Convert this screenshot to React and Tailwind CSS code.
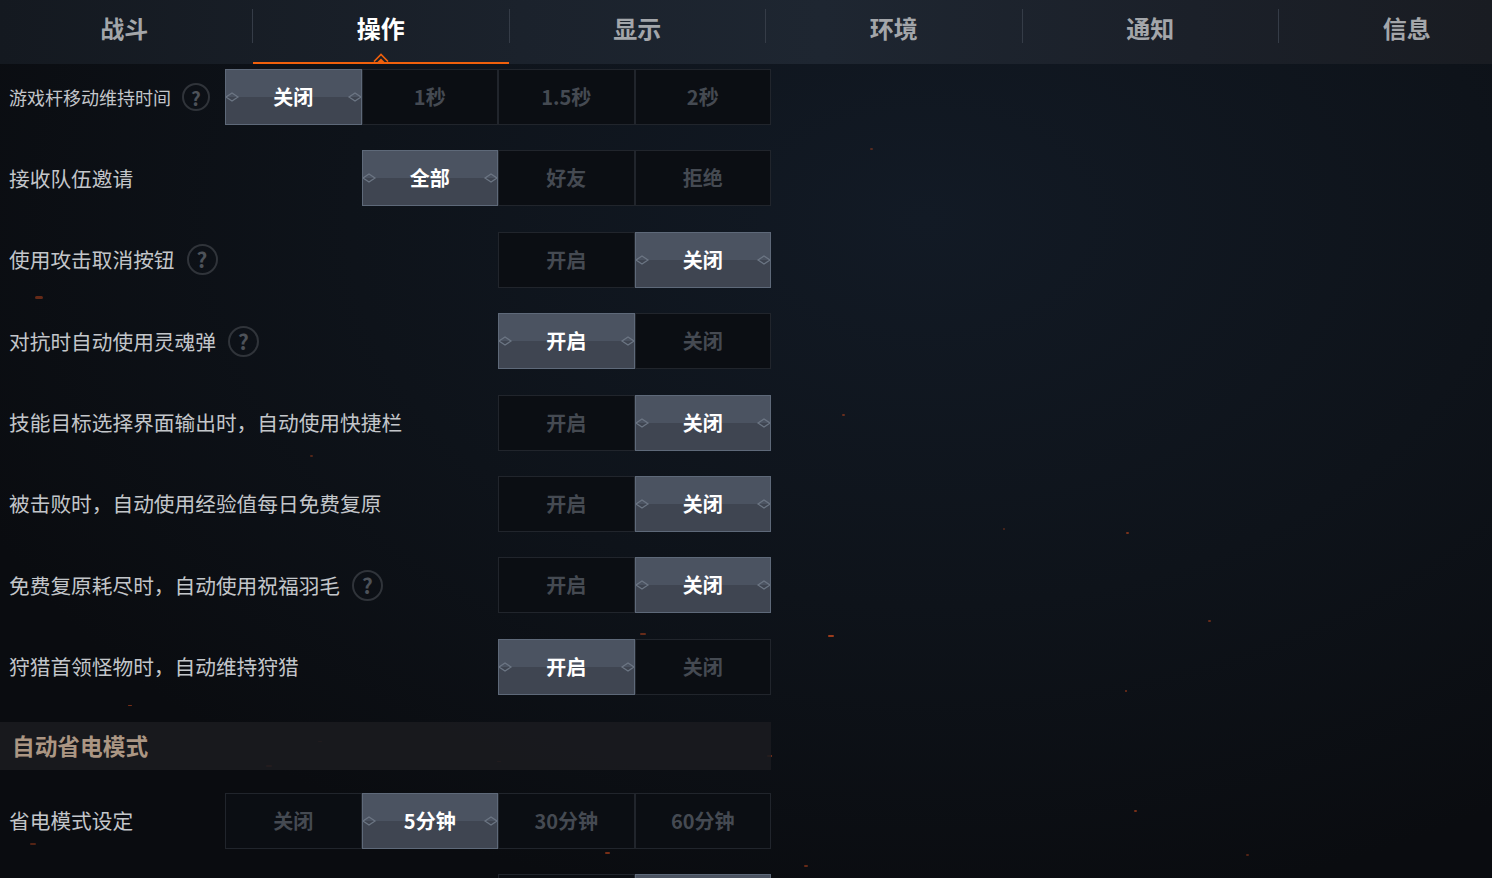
import React from "react";

const tabs = ["战斗", "操作", "显示", "环境", "通知", "信息"];

const rows = [
  { label: "游戏杆移动维持时间", small: true, help: true, options: ["关闭", "1秒", "1.5秒", "2秒"], active: 0 },
  { label: "接收队伍邀请", options: ["全部", "好友", "拒绝"], active: 0 },
  { label: "使用攻击取消按钮", help: true, options: ["开启", "关闭"], active: 1 },
  { label: "对抗时自动使用灵魂弹", help: true, options: ["开启", "关闭"], active: 0 },
  { label: "技能目标选择界面输出时，自动使用快捷栏", options: ["开启", "关闭"], active: 1 },
  { label: "被击败时，自动使用经验值每日免费复原", options: ["开启", "关闭"], active: 1 },
  { label: "免费复原耗尽时，自动使用祝福羽毛", help: true, options: ["开启", "关闭"], active: 1 },
  { label: "狩猎首领怪物时，自动维持狩猎", options: ["开启", "关闭"], active: 0 },
];

const sparks = [
  [35, 296, 8, 3, 0.5], [566, 402, 14, 5, 0.35], [828, 635, 6, 2, 0.8], [842, 414, 3, 2, 0.5],
  [1126, 532, 3, 2, 0.6], [1125, 690, 2, 2, 0.6], [1003, 528, 2, 2, 0.4], [1208, 620, 3, 2, 0.5],
  [128, 705, 4, 1, 0.6], [318, 741, 4, 1, 0.5], [497, 761, 4, 1, 0.5], [266, 765, 6, 2, 0.6],
  [767, 755, 5, 2, 0.7], [640, 633, 6, 2, 0.5], [605, 852, 5, 2, 0.6], [30, 843, 6, 2, 0.4],
  [804, 865, 4, 2, 0.5], [1134, 810, 3, 2, 0.6], [1246, 854, 3, 2, 0.4], [407, 845, 4, 1, 0.4],
  [870, 148, 3, 2, 0.4], [310, 455, 3, 2, 0.4],
];

const Diamond = ({ side }) => (
  <svg
    width="14"
    height="10"
    viewBox="0 0 14 10"
    className={`absolute top-1/2 -translate-y-1/2 ${side === "left" ? "left-0" : "right-0 rotate-180"}`}
  >
    <path d="M0 5 L6 1 L12 5 L6 9 Z" fill="none" stroke="#6c7684" strokeWidth="1.2" />
  </svg>
);

const Help = ({ small }) => (
  <span
    className={`rounded-full border-2 border-[#30343a] flex items-center justify-center font-bold text-[#4d5259] leading-none ${
      small ? "w-[28px] h-[28px] text-[19px]" : "w-[31px] h-[31px] text-[21px]"
    }`}
  >
    ?
  </span>
);

const Option = ({ text, active }) =>
  active ? (
    <div className="relative w-[136.5px] h-[56px] border border-[#5e6979] bg-[linear-gradient(to_bottom,#4b5361_0%,#4b5361_50%,#3f4551_50%,#3f4551_100%)] flex items-center justify-center text-[20px] font-bold text-white">
      <Diamond side="left" />
      <Diamond side="right" />
      {text}
    </div>
  ) : (
    <div className="w-[136.5px] h-[56px] border border-[#21252c] bg-[#0b0e13] flex items-center justify-center text-[20px] font-bold text-[#454a52]">
      {text}
    </div>
  );

const Row = ({ row }) => (
  <div className="h-[56px] w-[771px] flex items-center justify-between">
    <div className={`pl-[9px] flex items-center text-[#c3c6ca] ${row.small ? "text-[18px] gap-[11px]" : "text-[20.7px] gap-[12px]"}`}>
      <span>{row.label}</span>
      {row.help && <Help small={row.small} />}
    </div>
    <div className="flex">
      {row.options.map((o, i) => (
        <Option key={i} text={o} active={i === row.active} />
      ))}
    </div>
  </div>
);

export default function App() {
  return (
    <div
      className="relative w-[1492px] h-[878px] overflow-hidden bg-[radial-gradient(ellipse_70%_80%_at_62%_25%,#121a25_0%,#0e131a_55%,#0a0c10_100%)]"
      style={{ fontFamily: '"Noto Sans CJK SC", "Noto Sans", sans-serif' }}
    >
      {sparks.map(([x, y, w, h, o], i) => (
        <span
          key={i}
          className="absolute rounded-full bg-[#c0461c]"
          style={{ left: x, top: y, width: w, height: h, opacity: o }}
        />
      ))}

      <div className="relative h-[64px] bg-[linear-gradient(to_right,#141920_0%,#1b222c_35%,#1e2631_55%,#1b2029_80%,#191c22_100%)] overflow-hidden">
        <div className="flex ml-[-3.5px] h-full">
          {tabs.map((t, i) => (
            <React.Fragment key={t}>
              {i > 0 && <div className="w-px h-[34px] mt-[9px] bg-[#353c47] shrink-0" />}
              <div
                className={`relative shrink-0 w-[255.5px] h-full flex items-center justify-center pb-[9px] text-[24px] font-bold ${
                  i === 1 ? "text-white" : "text-[#a3a6aa]"
                }`}
              >
                {t}
                {i === 1 && (
                  <>
                    <div className="absolute left-0 right-0 bottom-0 h-[2px] bg-[#f0600c]" />
                    <svg width="16" height="9" viewBox="0 0 16 9" className="absolute bottom-[2px] left-1/2 -translate-x-1/2">
                      <path d="M1 8.5 L8 1.5 L15 8.5" fill="none" stroke="#f0600c" strokeWidth="1.6" />
                      <path d="M4.5 9 L8 5.5 L11.5 9 Z" fill="#f0600c" />
                    </svg>
                  </>
                )}
              </div>
            </React.Fragment>
          ))}
        </div>
      </div>

      <div className="relative pt-[5px] flex flex-col">
        <div className="flex flex-col gap-[25.4px]">
          {rows.map((r) => (
            <Row key={r.label} row={r} />
          ))}
        </div>

        <div className="mt-[27px] h-[48px] w-[771px] bg-[#191b1f]/90 flex items-center pl-[12px] text-[22.7px] font-bold text-[#ab9683]">
          自动省电模式
        </div>

        <div className="mt-[23px]">
          <Row row={{ label: "省电模式设定", options: ["关闭", "5分钟", "30分钟", "60分钟"], active: 1 }} />
        </div>

        <div className="mt-[25px]">
          <Row row={{ label: "", options: ["", ""], active: 1 }} />
        </div>
      </div>
    </div>
  );
}
